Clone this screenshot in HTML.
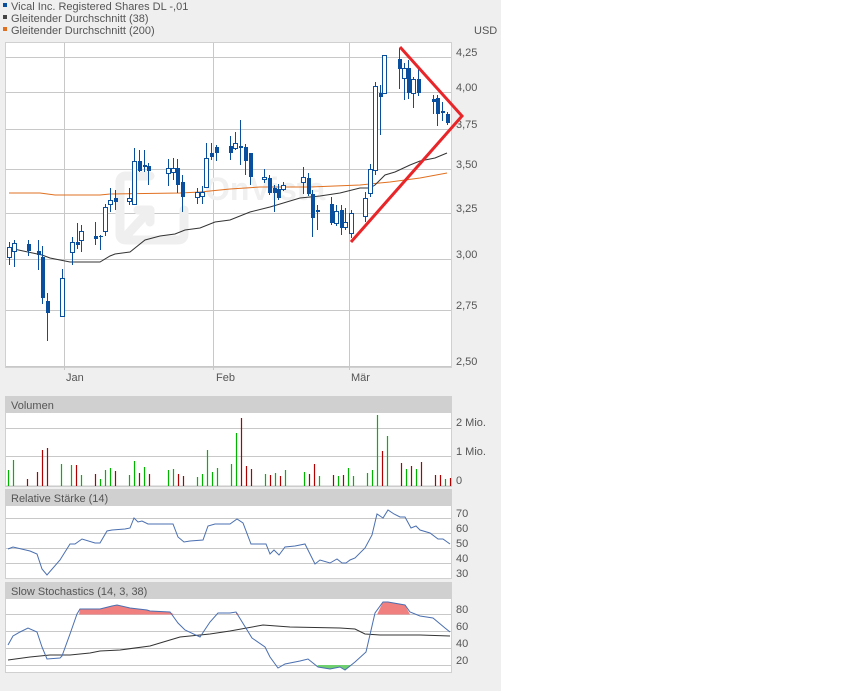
<!DOCTYPE html>
<html><head><meta charset="utf-8"><style>
body{margin:0;background:#fff;width:850px;height:691px;overflow:hidden}
svg{display:block;font-family:"Liberation Sans",sans-serif}
.t{font-size:11px;fill:#555}
.g{stroke:#c8c8c8;stroke-width:1}
.w{stroke:#0a4f9e;stroke-width:1}
.f{fill:#0a4f9e}
.h{fill:#fff;stroke:#0a4f9e;stroke-width:1}
.vg{stroke:#00b400;stroke-width:1.2}
.vr{stroke:#b00000;stroke-width:1.2}
</style></head><body>
<svg width="850" height="691" viewBox="0 0 850 691">
<rect x="0" y="0" width="501" height="691" fill="#efefef"/>
<rect x="3" y="3" width="4" height="4" fill="#0a4f9e"/>
<text class="t" x="11" y="10">Vical Inc. Registered Shares DL -,01</text>
<rect x="3" y="15" width="4" height="4" fill="#444"/>
<text class="t" x="11" y="22">Gleitender Durchschnitt (38)</text>
<rect x="3" y="27" width="4" height="4" fill="#e07020"/>
<text class="t" x="11" y="34">Gleitender Durchschnitt (200)</text>
<text class="t" x="474" y="34">USD</text>

<rect x="5.5" y="42.5" width="446" height="325" fill="#fff" stroke="#d0d0d0"/>
<g class="g">
<line x1="6" y1="57.5" x2="451" y2="57.5"/><line x1="6" y1="92.5" x2="451" y2="92.5"/>
<line x1="6" y1="129.5" x2="451" y2="129.5"/><line x1="6" y1="169.5" x2="451" y2="169.5"/>
<line x1="6" y1="213.5" x2="451" y2="213.5"/><line x1="6" y1="259.5" x2="451" y2="259.5"/>
<line x1="6" y1="310.5" x2="451" y2="310.5"/><line x1="6" y1="366.5" x2="451" y2="366.5"/>
<line x1="64.5" y1="43" x2="64.5" y2="370"/><line x1="213.5" y1="43" x2="213.5" y2="370"/>
<line x1="349.5" y1="43" x2="349.5" y2="370"/>
</g>
<text class="t" x="456" y="56">4,25</text><text class="t" x="456" y="91">4,00</text>
<text class="t" x="456" y="128">3,75</text><text class="t" x="456" y="168">3,50</text>
<text class="t" x="456" y="212">3,25</text><text class="t" x="456" y="258">3,00</text>
<text class="t" x="456" y="309">2,75</text><text class="t" x="456" y="365">2,50</text>
<text class="t" x="66" y="381">Jan</text><text class="t" x="216" y="381">Feb</text><text class="t" x="351" y="381">Mär</text>
<g fill="none" stroke="#efefef" stroke-width="9" stroke-linecap="round" stroke-linejoin="round"><path d="M150 176 H126 Q120 176 120 182 V234 Q120 240 126 240 H178 Q184 240 184 234 V210"/><path d="M126 236 L150 210"/><path d="M138 210 H150 V222"/></g>
<text x="205" y="200" font-size="32" font-weight="bold" fill="#f0f0f0">OnVista</text>
<polyline fill="none" stroke="#e07020" stroke-width="1" points="9,193 40,193 55,195 100,195 110,194 180,193 200,192 230,189 260,187 310,187 360,185 390,182 420,178 447,173"/>
<polyline fill="none" stroke="#333" stroke-width="1" points="9,248 42,255 50,258 70,262 100,262 110,256 115,254 130,252 145,240 160,236 175,234 185,230 200,228 215,222 230,220 250,212 270,207 300,198 320,196 340,193 360,188 370,188 375,185 385,175 395,172 410,165 420,161 435,158 447,153"/>
<g>
<line class="w" x1="9.5" y1="242" x2="9.5" y2="265"/><rect class="h" x="7.5" y="247.5" width="4" height="10"/>
<line class="w" x1="14.5" y1="240" x2="14.5" y2="267"/><rect class="h" x="12.5" y="243.5" width="4" height="8"/>
<line class="w" x1="28.5" y1="240" x2="28.5" y2="256"/><rect class="f" x="27" y="244" width="4" height="7"/>
<line class="w" x1="38.5" y1="240" x2="38.5" y2="270"/><rect class="f" x="37" y="251" width="4" height="4"/>
<line class="w" x1="42.5" y1="246" x2="42.5" y2="304"/><rect class="f" x="41" y="257" width="4" height="41"/>
<line class="w" x1="47.5" y1="293" x2="47.5" y2="341"/><rect class="f" x="46" y="301" width="4" height="12"/>
<line class="w" x1="62.5" y1="269" x2="62.5" y2="316"/><rect class="h" x="60.5" y="278.5" width="4" height="38"/>
<line class="w" x1="72.5" y1="237" x2="72.5" y2="265"/><rect class="h" x="70.5" y="242.5" width="4" height="10"/>
<line class="w" x1="77.5" y1="223" x2="77.5" y2="249"/><rect class="f" x="76" y="242" width="4" height="3"/>
<line class="w" x1="81.5" y1="225" x2="81.5" y2="252"/><rect class="h" x="79.5" y="231.5" width="4" height="9"/>
<line class="w" x1="95.5" y1="222" x2="95.5" y2="245"/><rect class="f" x="94" y="236" width="4" height="3"/>
<line class="w" x1="100.5" y1="235" x2="100.5" y2="250"/><rect class="f" x="99" y="236" width="4" height="1"/>
<line class="w" x1="105.5" y1="204" x2="105.5" y2="236"/><rect class="h" x="103.5" y="207.5" width="4" height="24"/>
<line class="w" x1="110.5" y1="188" x2="110.5" y2="212"/><rect class="h" x="108.5" y="200.5" width="4" height="4"/>
<line class="w" x1="115.5" y1="190" x2="115.5" y2="210"/><rect class="f" x="114" y="198" width="4" height="4"/>
<line class="w" x1="129.5" y1="188" x2="129.5" y2="205"/><rect class="h" x="127.5" y="198.5" width="4" height="3"/>
<line class="w" x1="134.5" y1="148" x2="134.5" y2="204"/><rect class="h" x="132.5" y="161.5" width="4" height="43"/>
<line class="w" x1="139.5" y1="150" x2="139.5" y2="172"/><rect class="f" x="138" y="161" width="4" height="10"/>
<line class="w" x1="144.5" y1="150" x2="144.5" y2="172"/><rect class="f" x="143" y="165" width="4" height="2"/>
<line class="w" x1="148.5" y1="163" x2="148.5" y2="185"/><rect class="f" x="147" y="166" width="4" height="5"/>
<line class="w" x1="168.5" y1="159" x2="168.5" y2="186"/><rect class="h" x="166.5" y="168.5" width="4" height="5"/>
<line class="w" x1="173.5" y1="158" x2="173.5" y2="180"/><rect class="h" x="171.5" y="168.5" width="4" height="4"/>
<line class="w" x1="177.5" y1="159" x2="177.5" y2="193"/><rect class="f" x="176" y="168" width="4" height="17"/>
<line class="w" x1="182.5" y1="175" x2="182.5" y2="212"/><rect class="f" x="181" y="182" width="4" height="15"/>
<line class="w" x1="197.5" y1="188" x2="197.5" y2="204"/><rect class="h" x="195.5" y="192.5" width="4" height="5"/>
<line class="w" x1="202.5" y1="186" x2="202.5" y2="204"/><rect class="h" x="200.5" y="192.5" width="4" height="4"/>
<line class="w" x1="206.5" y1="143" x2="206.5" y2="188"/><rect class="h" x="204.5" y="158.5" width="4" height="29"/>
<line class="w" x1="211.5" y1="143" x2="211.5" y2="160"/><rect class="f" x="210" y="153" width="4" height="4"/>
<line class="w" x1="216.5" y1="145" x2="216.5" y2="161"/><rect class="f" x="215" y="147" width="4" height="6"/>
<line class="w" x1="230.5" y1="136" x2="230.5" y2="160"/><rect class="f" x="229" y="146" width="4" height="7"/>
<line class="w" x1="235.5" y1="132" x2="235.5" y2="150"/><rect class="h" x="233.5" y="143.5" width="4" height="5"/>
<line class="w" x1="240.5" y1="120" x2="240.5" y2="165"/><rect class="f" x="239" y="146" width="4" height="2"/>
<line class="w" x1="245.5" y1="144" x2="245.5" y2="175"/><rect class="f" x="244" y="147" width="4" height="14"/>
<line class="w" x1="250.5" y1="153" x2="250.5" y2="185"/><rect class="f" x="249" y="153" width="4" height="24"/>
<line class="w" x1="264.5" y1="169" x2="264.5" y2="183"/><rect class="h" x="262.5" y="177.5" width="4" height="2"/>
<line class="w" x1="269.5" y1="175" x2="269.5" y2="195"/><rect class="f" x="268" y="178" width="4" height="15"/>
<line class="w" x1="274.5" y1="185" x2="274.5" y2="212"/><rect class="f" x="273" y="188" width="4" height="5"/>
<line class="w" x1="278.5" y1="184" x2="278.5" y2="200"/><rect class="f" x="277" y="189" width="4" height="9"/>
<line class="w" x1="283.5" y1="182" x2="283.5" y2="191"/><rect class="h" x="281.5" y="185.5" width="4" height="4"/>
<line class="w" x1="303.5" y1="167" x2="303.5" y2="194"/><rect class="h" x="301.5" y="177.5" width="4" height="5"/>
<line class="w" x1="308.5" y1="173" x2="308.5" y2="196"/><rect class="f" x="307" y="178" width="4" height="16"/>
<line class="w" x1="312.5" y1="190" x2="312.5" y2="237"/><rect class="f" x="311" y="194" width="4" height="24"/>
<line class="w" x1="317.5" y1="205" x2="317.5" y2="230"/><rect class="f" x="316" y="210" width="4" height="2"/>
<line class="w" x1="331.5" y1="197" x2="331.5" y2="225"/><rect class="f" x="330" y="204" width="4" height="19"/>
<line class="w" x1="336.5" y1="205" x2="336.5" y2="226"/><rect class="h" x="334.5" y="211.5" width="4" height="12"/>
<line class="w" x1="341.5" y1="205" x2="341.5" y2="235"/><rect class="f" x="340" y="210" width="4" height="18"/>
<line class="w" x1="345.5" y1="208" x2="345.5" y2="230"/><rect class="h" x="343.5" y="222.5" width="4" height="5"/>
<line class="w" x1="351.5" y1="210" x2="351.5" y2="238"/><rect class="h" x="349.5" y="213.5" width="4" height="20"/>
<line class="w" x1="365.5" y1="192" x2="365.5" y2="222"/><rect class="h" x="363.5" y="198.5" width="4" height="18"/>
<line class="w" x1="370.5" y1="164" x2="370.5" y2="197"/><rect class="h" x="368.5" y="169.5" width="4" height="24"/>
<line class="w" x1="375.5" y1="82" x2="375.5" y2="175"/><rect class="h" x="373.5" y="86.5" width="4" height="84"/>
<line class="w" x1="380.5" y1="85" x2="380.5" y2="135"/><rect class="f" x="379" y="93" width="4" height="4"/>
<line class="w" x1="384.5" y1="55" x2="384.5" y2="94"/><rect class="h" x="382.5" y="55.5" width="4" height="38"/>
<line class="w" x1="399.5" y1="48" x2="399.5" y2="89"/><rect class="f" x="398" y="59" width="4" height="10"/>
<line class="w" x1="404.5" y1="63" x2="404.5" y2="100"/><rect class="h" x="402.5" y="68.5" width="4" height="10"/>
<line class="w" x1="408.5" y1="60" x2="408.5" y2="99"/><rect class="f" x="407" y="68" width="4" height="25"/>
<line class="w" x1="413.5" y1="77" x2="413.5" y2="108"/><rect class="h" x="411.5" y="79.5" width="4" height="14"/>
<line class="w" x1="418.5" y1="67" x2="418.5" y2="96"/><rect class="f" x="417" y="79" width="4" height="14"/>
<line class="w" x1="433.5" y1="95" x2="433.5" y2="114"/><rect class="f" x="432" y="99" width="4" height="3"/>
<line class="w" x1="437.5" y1="95" x2="437.5" y2="126"/><rect class="f" x="436" y="98" width="4" height="16"/>
<line class="w" x1="442.5" y1="102" x2="442.5" y2="121"/><rect class="f" x="441" y="111" width="4" height="2"/>
<line class="w" x1="447.5" y1="112" x2="447.5" y2="125"/><rect class="f" x="446" y="114" width="4" height="9"/>
</g>
<polyline fill="none" stroke="#e8262a" stroke-width="3" stroke-linejoin="miter" points="400,47 462,116 351,242"/>

<rect x="5.5" y="396.5" width="446" height="90" fill="#fff" stroke="#d0d0d0"/>
<rect x="6" y="397" width="445" height="16" fill="#d0d0d0"/>
<text class="t" x="11" y="409">Volumen</text>
<g class="g"><line x1="6" y1="428.5" x2="451" y2="428.5"/><line x1="6" y1="456.5" x2="451" y2="456.5"/><line x1="6" y1="486" x2="451" y2="486"/></g>
<text class="t" x="456" y="426">2 Mio.</text><text class="t" x="456" y="455">1 Mio.</text><text class="t" x="456" y="484">0</text>
<g>
<line class="vg" x1="8.5" y1="470" x2="8.5" y2="486"/><line class="vg" x1="13.5" y1="460" x2="13.5" y2="486"/>
<line class="vr" x1="27.5" y1="479" x2="27.5" y2="486"/><line class="vr" x1="37.5" y1="472" x2="37.5" y2="486"/>
<line class="vr" x1="42.5" y1="450" x2="42.5" y2="486"/><line class="vr" x1="47.5" y1="448" x2="47.5" y2="486"/>
<line class="vg" x1="61.5" y1="464" x2="61.5" y2="486"/><line class="vg" x1="71.5" y1="465" x2="71.5" y2="486"/>
<line class="vr" x1="76.5" y1="465" x2="76.5" y2="486"/><line class="vg" x1="81.5" y1="475" x2="81.5" y2="486"/>
<line class="vr" x1="95.5" y1="474" x2="95.5" y2="486"/><line class="vg" x1="100.5" y1="479" x2="100.5" y2="486"/>
<line class="vg" x1="105.5" y1="470" x2="105.5" y2="486"/><line class="vg" x1="110.5" y1="468" x2="110.5" y2="486"/>
<line class="vr" x1="115.5" y1="471" x2="115.5" y2="486"/><line class="vg" x1="129.5" y1="475" x2="129.5" y2="486"/>
<line class="vg" x1="134.5" y1="461" x2="134.5" y2="486"/><line class="vr" x1="139.5" y1="473" x2="139.5" y2="486"/>
<line class="vg" x1="144.5" y1="467" x2="144.5" y2="486"/><line class="vr" x1="149.5" y1="474" x2="149.5" y2="486"/>
<line class="vg" x1="168.5" y1="470" x2="168.5" y2="486"/><line class="vg" x1="173.5" y1="469" x2="173.5" y2="486"/>
<line class="vr" x1="178.5" y1="474" x2="178.5" y2="486"/><line class="vr" x1="183.5" y1="476" x2="183.5" y2="486"/>
<line class="vg" x1="197.5" y1="477" x2="197.5" y2="486"/><line class="vg" x1="202.5" y1="474" x2="202.5" y2="486"/>
<line class="vg" x1="207.5" y1="450" x2="207.5" y2="486"/><line class="vg" x1="212.5" y1="472" x2="212.5" y2="486"/>
<line class="vg" x1="217.5" y1="468" x2="217.5" y2="486"/><line class="vg" x1="231.5" y1="464" x2="231.5" y2="486"/>
<line class="vg" x1="236.5" y1="433" x2="236.5" y2="486"/><line class="vr" x1="241.5" y1="418" x2="241.5" y2="486"/>
<line class="vr" x1="246.5" y1="466" x2="246.5" y2="486"/><line class="vr" x1="251.5" y1="469" x2="251.5" y2="486"/>
<line class="vg" x1="265.5" y1="474" x2="265.5" y2="486"/><line class="vr" x1="270.5" y1="475" x2="270.5" y2="486"/>
<line class="vg" x1="275.5" y1="473" x2="275.5" y2="486"/><line class="vr" x1="280.5" y1="476" x2="280.5" y2="486"/>
<line class="vg" x1="285.5" y1="470" x2="285.5" y2="486"/><line class="vg" x1="304.5" y1="472" x2="304.5" y2="486"/>
<line class="vr" x1="309.5" y1="474" x2="309.5" y2="486"/><line class="vr" x1="314.5" y1="464" x2="314.5" y2="486"/>
<line class="vg" x1="319.5" y1="476" x2="319.5" y2="486"/><line class="vr" x1="333.5" y1="475" x2="333.5" y2="486"/>
<line class="vg" x1="338.5" y1="476" x2="338.5" y2="486"/><line class="vr" x1="343.5" y1="475" x2="343.5" y2="486"/>
<line class="vg" x1="348.5" y1="468" x2="348.5" y2="486"/><line class="vg" x1="353.5" y1="476" x2="353.5" y2="486"/>
<line class="vg" x1="367.5" y1="473" x2="367.5" y2="486"/><line class="vg" x1="372.5" y1="470" x2="372.5" y2="486"/>
<line class="vg" x1="377.5" y1="415" x2="377.5" y2="486"/><line class="vr" x1="382.5" y1="451" x2="382.5" y2="486"/>
<line class="vg" x1="387.5" y1="436" x2="387.5" y2="486"/><line class="vr" x1="401.5" y1="463" x2="401.5" y2="486"/>
<line class="vg" x1="406.5" y1="469" x2="406.5" y2="486"/><line class="vr" x1="411.5" y1="466" x2="411.5" y2="486"/>
<line class="vg" x1="416.5" y1="469" x2="416.5" y2="486"/><line class="vr" x1="421.5" y1="462" x2="421.5" y2="486"/>
<line class="vr" x1="435.5" y1="475" x2="435.5" y2="486"/><line class="vr" x1="440.5" y1="475" x2="440.5" y2="486"/>
<line class="vg" x1="445.5" y1="479" x2="445.5" y2="486"/><line class="vr" x1="450.5" y1="478" x2="450.5" y2="486"/>
</g>

<rect x="5.5" y="489.5" width="446" height="89" fill="#fff" stroke="#d0d0d0"/>
<rect x="6" y="490" width="445" height="16" fill="#d0d0d0"/>
<text class="t" x="11" y="502">Relative Stärke (14)</text>
<g class="g"><line x1="6" y1="518.5" x2="451" y2="518.5"/><line x1="6" y1="533.5" x2="451" y2="533.5"/><line x1="6" y1="548.5" x2="451" y2="548.5"/><line x1="6" y1="563.5" x2="451" y2="563.5"/></g>
<text class="t" x="456" y="517">70</text><text class="t" x="456" y="532">60</text><text class="t" x="456" y="547">50</text><text class="t" x="456" y="562">40</text><text class="t" x="456" y="577">30</text>
<polyline fill="none" stroke="#4a6fb0" stroke-width="1" points="8,549 13,547 30,551 37,554 42,569 47,575 60,560 70,544 75,544 82,539 95,543 100,543 107,531 112,530 125,529 130,528 134,518 138,522 142,521 148,524 160,524 173,524 178,537 184,542 190,541 203,540 208,526 215,524 230,524 237,519 243,523 251,544 266,544 270,554 274,550 279,555 285,547 295,546 305,544 315,564 320,560 330,563 337,559 342,563 346,563 350,560 355,558 365,548 372,535 377,514 383,518 388,510 394,514 400,517 405,517 411,528 416,526 420,530 430,533 438,539 443,539 450,544"/>

<rect x="5.5" y="582.5" width="446" height="90" fill="#fff" stroke="#d0d0d0"/>
<rect x="6" y="583" width="445" height="16" fill="#d0d0d0"/>
<text class="t" x="11" y="595">Slow Stochastics (14, 3, 38)</text>
<g class="g"><line x1="6" y1="614.5" x2="451" y2="614.5"/><line x1="6" y1="631.5" x2="451" y2="631.5"/><line x1="6" y1="648.5" x2="451" y2="648.5"/><line x1="6" y1="665.5" x2="451" y2="665.5"/></g>
<text class="t" x="456" y="613">80</text><text class="t" x="456" y="630">60</text><text class="t" x="456" y="647">40</text><text class="t" x="456" y="664">20</text>
<polygon fill="#f08080" points="79,614.5 80,609 100,609 112,606 117,605 130,608 147,610 150,611 170,612 174,614.5"/>
<polygon fill="#f08080" points="236,614.5 236,612 239,614.5"/>
<polygon fill="#f08080" points="377,614.5 383,602 388,602 405,605 410,614.5"/>
<polygon fill="#70d070" points="318,665 318,667 330,669 340,667 345,670 352,665"/>
<polyline fill="none" stroke="#333" stroke-width="1" points="8,660 30,657 50,655 70,655 90,653 100,651 120,650 150,646 160,643 170,640 180,637 210,634 230,631 263,625 290,627 340,628 355,629 365,634 380,635 420,635 450,636"/>
<polyline fill="none" stroke="#4a6fb0" stroke-width="1" points="8,645 13,636 20,632 28,628 37,632 42,647 47,659 60,658 62,656 70,634 77,614 80,609 100,609 112,606 117,605 130,608 147,610 150,611 170,612 178,623 185,630 200,637 210,622 218,613 230,613 236,612 244,625 252,638 265,647 270,657 278,668 285,664 300,661 308,659 318,667 330,669 340,667 345,670 355,662 366,652 375,613 383,602 388,602 405,605 410,612 420,616 433,618 445,628 450,632"/>
</svg>
</body></html>
